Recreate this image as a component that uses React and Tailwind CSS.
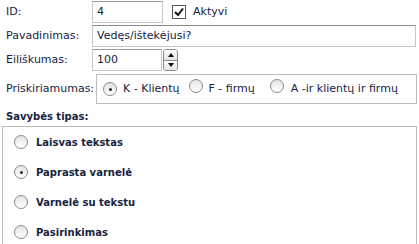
import React from 'react';

// Classic round radio button
const Radio = ({ checked }) => (
    <span className="relative inline-block w-[14px] h-[14px] rounded-full border border-[#8a8a8a] bg-gradient-to-b from-[#e4e4e4] to-[#ffffff] shrink-0">
        {checked && (
            <span className="absolute left-[4.5px] top-[4.5px] w-[3px] h-[3px] rounded-full bg-[#222]" />
        )}
    </span>
);

const Label = ({ children }) => (
    <div className="w-[92px] pl-[6px] shrink-0">{children}</div>
);

const App = () => {
    const options = [
        { text: 'Laisvas tekstas', checked: false },
        { text: 'Paprasta varnelė', checked: true },
        { text: 'Varnelė su tekstu', checked: false },
        { text: 'Pasirinkimas', checked: false },
    ];

    return (
        <div
            className="w-[419px] h-[244px] overflow-hidden bg-white text-[11px] text-[#16233f] pt-[1px]"
            style={{ fontFamily: '"DejaVu Sans", Verdana, sans-serif' }}
        >
            {/* ID + Aktyvi */}
            <div className="flex items-center h-[22px]">
                <Label>ID:</Label>
                <div className="w-[71px] h-[22px] border border-[#c6c6c6] border-t-[#9a9a9a] flex items-center px-[4px]">4</div>
                <span className="ml-[9px] w-[14px] h-[14px] border border-[#555] bg-white flex items-center justify-center">
                    <svg width="10" height="10" viewBox="0 0 10 10">
                        <path d="M1 5 L4 8 L9 1.5" fill="none" stroke="#111" strokeWidth="2" />
                    </svg>
                </span>
                <span className="ml-[7px]">Aktyvi</span>
            </div>

            {/* Pavadinimas */}
            <div className="flex items-center h-[22px] mt-[2px]">
                <Label>Pavadinimas:</Label>
                <div className="w-[324px] h-[22px] border border-[#c6c6c6] border-t-[#8a8a8a] flex items-center px-[4px]">
                    Vedęs/ištekėjusi?
                </div>
            </div>

            {/* Eiliškumas with spinner */}
            <div className="flex items-center h-[22px] mt-[2px]">
                <Label>Eiliškumas:</Label>
                <div className="w-[70px] h-[22px] border border-[#c6c6c6] border-t-[#9a9a9a] flex items-center px-[4px]">100</div>
                <div className="ml-[1px] w-[15px] h-[22px] border border-[#8a8a8a] rounded-[3px] flex flex-col overflow-hidden">
                    <div className="flex-1 flex items-center justify-center bg-gradient-to-b from-white to-[#e4e4e4] border-b border-[#8a8a8a]">
                        <span className="w-0 h-0 border-l-[3px] border-r-[3px] border-b-[4px] border-l-transparent border-r-transparent border-b-[#111]" />
                    </div>
                    <div className="flex-1 flex items-center justify-center bg-gradient-to-b from-white to-[#e4e4e4]">
                        <span className="w-0 h-0 border-l-[3px] border-r-[3px] border-t-[4px] border-l-transparent border-r-transparent border-t-[#111]" />
                    </div>
                </div>
            </div>

            {/* Priskiriamumas */}
            <div className="flex items-center mt-[3px]">
                <div className="w-[96px] pl-[6px] shrink-0">Priskiriamumas:</div>
                <div className="w-[321px] h-[30px] border border-[#bdbdbd] flex items-center pl-[6px]">
                    <Radio checked />
                    <span className="ml-[6px]">K - Klientų</span>
                    <span className="ml-[9px]"><Radio /></span>
                    <span className="ml-[6px]">F - firmų</span>
                    <span className="ml-[15px]"><Radio /></span>
                    <span className="ml-[7px]">A -ir klientų ir firmų</span>
                </div>
            </div>

            {/* Savybės tipas */}
            <div className="pl-[6px] mt-[3px] h-[18px] flex items-center font-bold text-[10px]">Savybės tipas:</div>

            <div className="ml-[2px] mt-[1px] w-[415px] h-[140px] border border-[#bdbdbd]">
                {options.map((o) => (
                    <div key={o.text} className="h-[30px] flex items-center pl-[11px] font-bold text-[10px]">
                        <Radio checked={o.checked} />
                        <span className="ml-[8px]">{o.text}</span>
                    </div>
                ))}
            </div>
        </div>
    );
};

export default App;
